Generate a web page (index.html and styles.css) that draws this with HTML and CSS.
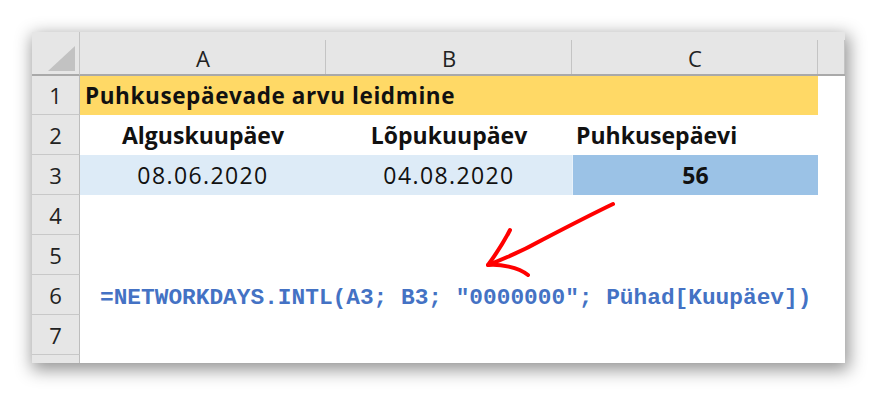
FILE: index.html
```html
<!DOCTYPE html>
<html lang="et">
<head>
<meta charset="utf-8">
<title>Puhkusepäevade arvu leidmine</title>
<link rel="stylesheet" href="styles.css">
</head>
<body>
<div class="sheet">
  <div class="grid">
    <div class="corner"><span class="tri"></span></div>
    <div class="colhead">A</div>
    <div class="colhead">B</div>
    <div class="colhead">C</div>
    <div class="colhead last"></div>

    <div class="rowhead">1</div>
    <div class="cell title span3">Puhkusepäevade arvu leidmine</div>
    <div class="cell"></div>

    <div class="rowhead">2</div>
    <div class="cell bold center">Alguskuupäev</div>
    <div class="cell bold center">Lõpukuupäev</div>
    <div class="cell bold left">Puhkusepäevi</div>
    <div class="cell"></div>

    <div class="rowhead">3</div>
    <div class="cell center light date">08.06.2020</div>
    <div class="cell center light date">04.08.2020</div>
    <div class="cell center bold dark">56</div>
    <div class="cell"></div>

    <div class="rowhead">4</div>
    <div class="cell span4"></div>

    <div class="rowhead">5</div>
    <div class="cell span4"></div>

    <div class="rowhead">6</div>
    <div class="cell formula span4">=NETWORKDAYS.INTL(A3; B3; "0000000"; Pühad[Kuupäev])</div>

    <div class="rowhead">7</div>
    <div class="cell span4"></div>

    <div class="rowhead"></div>
    <div class="cell span4"></div>
  </div>
  <svg class="arrow" width="160" height="90" viewBox="0 0 160 90">
    <path d="M143 12 C 118 24, 95 36, 72 48 C 56 57, 36 66, 18 73" fill="none" stroke="#ff0000" stroke-width="4" stroke-linecap="round"/>
    <path d="M40 38 C 34 50, 26 62, 18 73 C 30 72, 48 75, 58 83" fill="none" stroke="#ff0000" stroke-width="4" stroke-linecap="round" stroke-linejoin="round"/>
  </svg>
</div>
</body>
</html>
```

FILE: styles.css
```css
html, body {
  margin: 0;
  padding: 0;
  background: #ffffff;
}

body {
  width: 877px;
  height: 396px;
  overflow: hidden;
  padding-top: 32px;
  padding-left: 32px;
  box-sizing: border-box;
}

.sheet {
  position: relative;
  width: 813px;
  height: 331px;
  overflow: hidden;
  background: #ffffff;
  box-shadow: 2px 5px 16px 2px rgba(0, 0, 0, 0.42);
  font-family: "Open Sans", "Liberation Sans", sans-serif;
  color: #111;
}

.grid {
  display: grid;
  grid-template-columns: 48px 246px 246px 246px 27px;
  grid-template-rows: 44px 39px repeat(7, 40px);
}

.corner {
  background: #e6e6e6;
  border-bottom: 2px solid #a9a9a9;
  border-right: 1px solid #c4c4c4;
  box-sizing: border-box;
  display: flex;
  align-items: flex-end;
  justify-content: flex-end;
  padding: 0 4px 3px 0;
}

.tri {
  width: 0;
  height: 0;
  border-left: 27px solid transparent;
  border-bottom: 25px solid #c2c2c2;
}

.colhead {
  background: #e6e6e6;
  border-bottom: 2px solid #a9a9a9;
  box-sizing: border-box;
  display: flex;
  align-items: center;
  justify-content: center;
  padding-top: 10px;
  font-size: 22px;
  color: #222;
  background-image: linear-gradient(#c4c4c4, #c4c4c4);
  background-size: 1px 34px;
  background-repeat: no-repeat;
  background-position: right bottom;
}

.rowhead {
  background: #e6e6e6;
  border-bottom: 1px solid #c8c8c8;
  border-right: 1px solid #bdbdbd;
  box-sizing: border-box;
  display: flex;
  align-items: center;
  justify-content: center;
  font-size: 22px;
  color: #222;
}

.cell {
  display: flex;
  align-items: center;
  font-size: 23px;
  white-space: nowrap;
  box-sizing: border-box;
}

.span3 { grid-column: span 3; }
.span4 { grid-column: span 4; }

.title {
  background: #ffd966;
  font-weight: 700;
  padding-left: 5px;
  font-size: 22.5px;
  letter-spacing: 0.6px;
}

.bold { font-weight: 700; }
.center { justify-content: center; }
.left { padding-left: 4px; }

.date { letter-spacing: 1.4px; }

.light { background: #ddebf7; }
.dark {
  background: #9bc2e6;
  border-left: 1px solid #e8f1fa;
}

.formula {
  font-family: "Liberation Mono", "Courier New", monospace;
  font-weight: 700;
  font-size: 22.8px;
  color: #4472c4;
  padding-left: 20px;
  padding-top: 5px;
}

.arrow {
  position: absolute;
  left: 438px;
  top: 160px;
}
```
